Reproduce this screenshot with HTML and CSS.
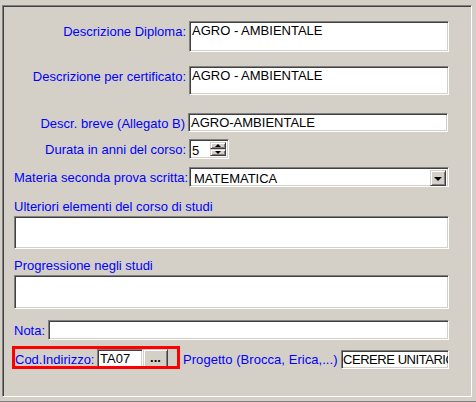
FILE: index.html
```html
<!DOCTYPE html>
<html>
<head>
<meta charset="utf-8">
<link rel="stylesheet" href="styles.css">
</head>
<body>
<div class="frame">
  <div class="row r1">
    <div class="lbl">Descrizione Diploma:</div>
    <div class="field wide h31">AGRO - AMBIENTALE</div>
  </div>
  <div class="row r2">
    <div class="lbl">Descrizione per certificato:</div>
    <div class="field wide h29">AGRO - AMBIENTALE</div>
  </div>
  <div class="row r3">
    <div class="lbl lbl-s">Descr. breve (Allegato B)</div>
    <div class="field wide h19">AGRO-AMBIENTALE</div>
  </div>
  <div class="row r4">
    <div class="lbl">Durata in anni del corso:</div>
    <div class="field spin">
      <span class="spin-val">5</span>
      <div class="spin-btns">
        <div class="sbtn"><span class="tri-up"></span></div>
        <div class="sbtn"><span class="tri-down"></span></div>
      </div>
    </div>
  </div>
  <div class="row r5">
    <div class="lbl">Materia seconda prova scritta:</div>
    <div class="field wide combo">
      <span class="combo-val">MATEMATICA</span>
      <div class="cbtn"><span class="tri-down"></span></div>
    </div>
  </div>
  <div class="cap c1">Ulteriori elementi del corso di studi</div>
  <div class="field full h33"></div>
  <div class="cap c2">Progressione negli studi</div>
  <div class="field full h34"></div>
  <div class="row nota">
    <div class="lbl-n">Nota:</div>
    <div class="field nota-f"></div>
  </div>
  <div class="row cod">
    <div class="lbl-c">Cod.Indirizzo:</div>
    <div class="field cod-f">TA07</div>
    <div class="btn">...</div>
    <div class="lbl-p">Progetto (Brocca, Erica,...)</div>
    <div class="field prog-f">CERERE UNITARIO</div>
    <div class="hilite"></div>
  </div>
</div>
<div class="bottom-line"></div>
</body>
</html>
```
FILE: styles.css
```css
* { box-sizing: border-box; }
html, body { margin: 0; padding: 0; }
body {
  background: #d4d0c8;
  font-family: "Liberation Sans", Arial, sans-serif;
  font-size: 13px;
  line-height: 15px;
  width: 476px;
  height: 402px;
  overflow: hidden;
}
.frame {
  margin: 5px 0 0 2px;
  width: 470px;
  height: 392px;
  border: 1px solid;
  border-color: #808080 #ffffff #ffffff #808080;
  box-shadow: inset 1px 1px 0 #404040, inset -1px -1px 0 #d4d0c8;
  padding: 1px 0 0 11px;
}
.bottom-line {
  margin-top: 4px;
  height: 1px;
  background: #808080;
}
.row { display: flex; align-items: flex-start; }
.lbl {
  width: 175px;
  padding: 3px 3px 0 0;
  text-align: right;
  color: #0000ff;
  white-space: nowrap;
}
.lbl-s { width: 174px; }
.field {
  background: #fff;
  border: 1px solid;
  border-color: #808080 #ffffff #ffffff #808080;
  box-shadow: inset 1px 1px 0 #404040, inset -1px -1px 0 #d4d0c8;
  padding: 1px 2px 0 2px;
  color: #000;
  white-space: nowrap;
  overflow: hidden;
}
.wide { width: 260px; }
.full { width: 435px; }
.h31 { height: 31px; }
.h29 { height: 29px; }
.h19 { height: 19px; }
.h33 { height: 33px; }
.h34 { height: 34px; }
.r1 { margin-top: 14px; }
.r2 { margin-top: 14px; }
.r3 { margin-top: 18px; }
.r4 { margin-top: 7px; }
.r5 { margin-top: 8px; }
.spin {
  width: 40px;
  height: 20px;
  display: flex;
  justify-content: space-between;
  padding: 2px 2px 2px 2px;
}
.spin-val { padding: 1px 0 0 0; line-height: 15px; }
.spin-btns { display: flex; flex-direction: column; width: 16px; }
.sbtn, .cbtn, .btn {
  background: #d4d0c8;
  border: 1px solid;
  border-color: #d4d0c8 #404040 #404040 #d4d0c8;
  box-shadow: inset 1px 1px 0 #ffffff, inset -1px -1px 0 #808080;
  display: flex;
  align-items: center;
  justify-content: center;
}
.sbtn { height: 8px; }
.tri-up {
  width: 0; height: 0;
  border-left: 3px solid transparent;
  border-right: 3px solid transparent;
  border-bottom: 3px solid #000;
}
.tri-down {
  width: 0; height: 0;
  border-left: 3px solid transparent;
  border-right: 3px solid transparent;
  border-top: 3px solid #000;
}
.cbtn .tri-down {
  border-left-width: 4px;
  border-right-width: 4px;
  border-top-width: 4px;
  margin-top: 1px;
}
.combo {
  height: 20px;
  display: flex;
  justify-content: space-between;
  padding: 2px 2px 2px 2px;
}
.combo-val { padding: 1px 0 0 2px; }
.cbtn { width: 16px; height: 16px; }
.cap { color: #0000ff; white-space: nowrap; }
.c1 { margin-top: 12px; margin-bottom: 2px; }
.c2 { margin-top: 9px; margin-bottom: 2px; }
.nota { margin-top: 11px; }
.lbl-n { width: 34px; padding-top: 3px; color: #0000ff; }
.nota-f { width: 401px; height: 20px; }
.cod { margin-top: 9px; position: relative; }
.lbl-c { width: 83px; padding: 3px 0 0 1px; color: #0000ff; white-space: nowrap; }
.cod-f { width: 46px; height: 20px; }
.btn {
  width: 25px;
  height: 20px;
  font-weight: bold;
  font-size: 13px;
  line-height: 10px;
  padding-bottom: 2px;
}
.lbl-p { margin-left: 15px; width: 158px; padding-top: 3px; color: #0000ff; white-space: nowrap; letter-spacing: 0.05px; }
.prog-f { width: 108px; height: 19px; margin-top: 1px; padding-left: 1px; letter-spacing: -0.45px; }
.hilite {
  position: absolute;
  left: -2px;
  top: -3px;
  width: 168px;
  height: 23px;
  border: 3px solid #ff0000;
  pointer-events: none;
}
```
